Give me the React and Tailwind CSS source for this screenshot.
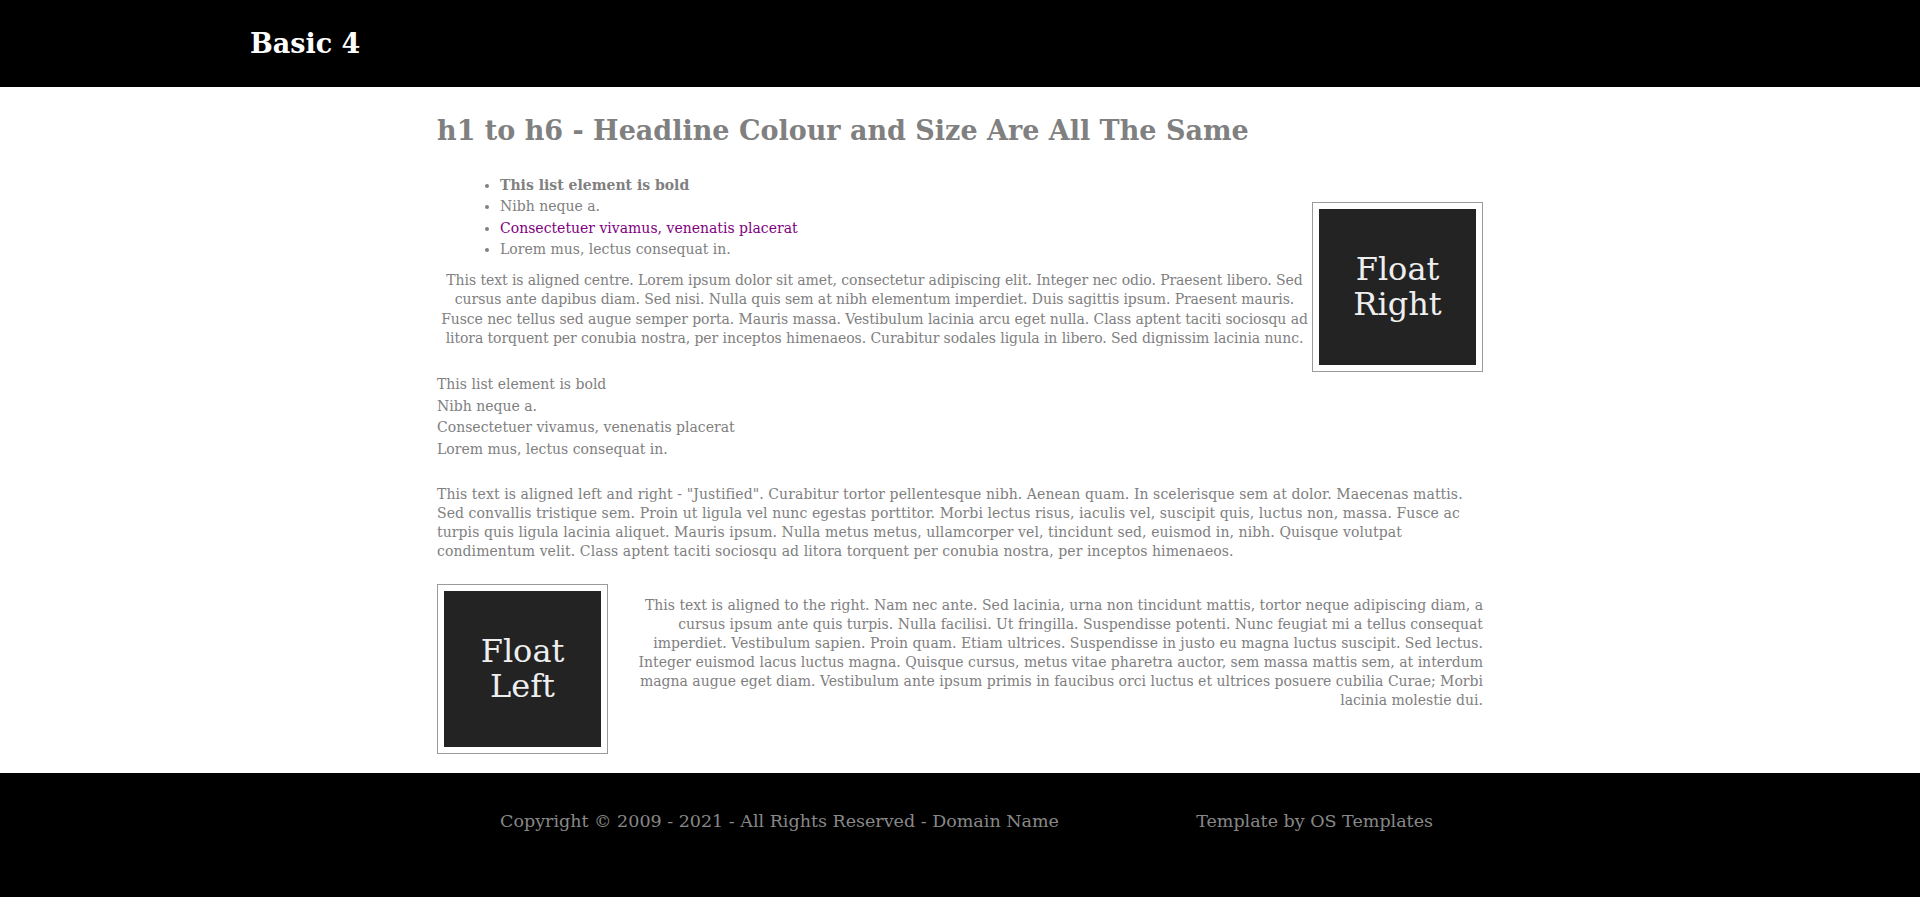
import React from "react";

const serif = { fontFamily: '"DejaVu Serif", Georgia, serif' };

function ImageBox({ top, bottom }) {
  return (
    <div className="border border-[#9a9a9a] bg-white p-[6px] shrink-0">
      <div className="w-[157px] h-[156px] bg-[#232323] flex flex-col items-center justify-center text-[#eeeeee] text-[32px] leading-[35px]">
        <span>{top}</span>
        <span>{bottom}</span>
      </div>
    </div>
  );
}

export default function App() {
  const items = [
    "This list element is bold",
    "Nibh neque a.",
    "Consectetuer vivamus, venenatis placerat",
    "Lorem mus, lectus consequat in.",
  ];

  return (
    <div style={serif} className="min-h-screen bg-white text-[#808080] text-[14px]">
      <header className="bg-black h-[87px]">
        <div className="w-[1420px] mx-auto h-full flex items-center">
          <h1 className="text-white font-bold text-[27px] leading-[32px]">Basic 4</h1>
        </div>
      </header>

      <main className="w-[1046px] mx-auto pt-[28px] pb-[19px]">
        <h2 className="font-bold text-[27px] leading-[32px] text-[#808080]">
          h1 to h6 - Headline Colour and Size Are All The Same
        </h2>

        <div className="flex items-start mt-[28px]">
          <div className="w-[875px]">
            <ul className="list-disc pl-[63px] leading-[21.3px]">
              <li className="font-bold">{items[0]}</li>
              <li>{items[1]}</li>
              <li>
                <a href="#" className="text-[#800080]">{items[2]}</a>
              </li>
              <li>{items[3]}</li>
            </ul>
            <p className="text-center leading-[19.2px] mt-[11px] tracking-[-0.08px]">
              This text is aligned centre. Lorem ipsum dolor sit amet, consectetur adipiscing elit. Integer nec odio. Praesent libero. Sed cursus ante dapibus diam. Sed nisi. Nulla quis sem at nibh elementum imperdiet. Duis sagittis ipsum. Praesent mauris. Fusce nec tellus sed augue semper porta. Mauris massa. Vestibulum lacinia arcu eget nulla. Class aptent taciti sociosqu ad litora torquent per conubia nostra, per inceptos himenaeos. Curabitur sodales ligula in libero. Sed dignissim lacinia nunc.
            </p>
          </div>
          <div className="mt-[27px]">
            <ImageBox top="Float" bottom="Right" />
          </div>
        </div>

        <ul className="leading-[21.6px] mt-[2px]">
          {items.map((t) => (
            <li key={t}>{t}</li>
          ))}
        </ul>

        <p className="leading-[18.8px] mt-[25px] tracking-[0.08px]">
          This text is aligned left and right - "Justified". Curabitur tortor pellentesque nibh. Aenean quam. In scelerisque sem at dolor. Maecenas mattis. Sed convallis tristique sem. Proin ut ligula vel nunc egestas porttitor. Morbi lectus risus, iaculis vel, suscipit quis, luctus non, massa. Fusce ac turpis quis ligula lacinia aliquet. Mauris ipsum. Nulla metus metus, ullamcorper vel, tincidunt sed, euismod in, nibh. Quisque volutpat condimentum velit. Class aptent taciti sociosqu ad litora torquent per conubia nostra, per inceptos himenaeos.
        </p>

        <div className="flex items-start mt-[23px]">
          <ImageBox top="Float" bottom="Left" />
          <p className="flex-1 pl-[20px] pt-[12px] text-right leading-[19px]">
            This text is aligned to the right. Nam nec ante. Sed lacinia, urna non tincidunt mattis, tortor neque adipiscing diam, a cursus ipsum ante quis turpis. Nulla facilisi. Ut fringilla. Suspendisse potenti. Nunc feugiat mi a tellus consequat imperdiet. Vestibulum sapien. Proin quam. Etiam ultrices. Suspendisse in justo eu magna luctus suscipit. Sed lectus. Integer euismod lacus luctus magna. Quisque cursus, metus vitae pharetra auctor, sem massa mattis sem, at interdum magna augue eget diam. Vestibulum ante ipsum primis in faucibus orci luctus et ultrices posuere cubilia Curae; Morbi lacinia molestie dui.
          </p>
        </div>
      </main>

      <footer className="bg-black h-[124px] pt-[36px]">
        <div className="w-[960px] mx-auto pl-[20px] pr-[7px] flex justify-between text-[17.5px] leading-[24px] text-[#888888]">
          <p>Copyright © 2009 - 2021 - All Rights Reserved - Domain Name</p>
          <p>Template by OS Templates</p>
        </div>
      </footer>
    </div>
  );
}
